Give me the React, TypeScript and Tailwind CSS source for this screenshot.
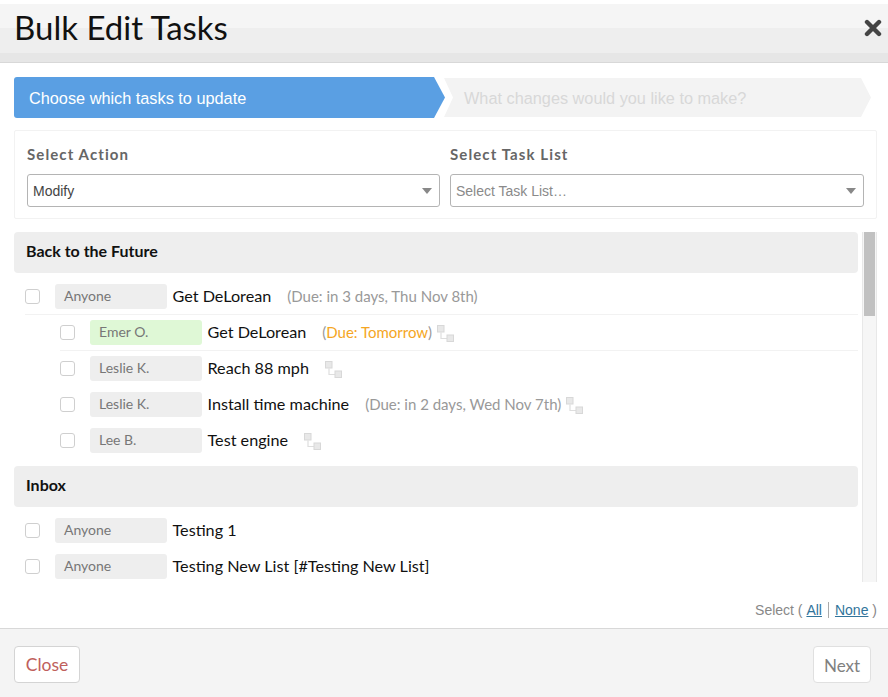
import React from 'react';

const SANS = 'font-["Lato","Open_Sans",sans-serif]';

function SubtaskIcon() {
  return (
    <svg width="18" height="18" viewBox="0 0 18 18" className="block mt-[4px]">
      <path d="M4 7.5V13.5H10.5" fill="none" stroke="#dedede" strokeWidth="1.2" />
      <rect x="0.5" y="0.5" width="6.5" height="6.5" fill="#e8e8e8" stroke="#d8d8d8" />
      <rect x="10" y="10" width="6.5" height="6.5" fill="#e8e8e8" stroke="#d8d8d8" />
    </svg>
  );
}

type Row = {
  who: string;
  title: string;
  due?: string;
  soon?: boolean;
  nested?: boolean;
  sub?: boolean;
  line?: boolean;
};

function TaskRow({ r }: { r: Row }) {
  return (
    <div className={`h-9 flex items-center ${r.nested ? 'pl-[46px]' : 'pl-[11px]'}`}>
      <div className={`h-full flex items-center flex-1 ${r.line ? 'shadow-[0_1px_0_#f2f2f2]' : ''}`}>
        <span className="w-[15px] h-[15px] rounded-[3px] border border-[#cfcfcf] bg-white shrink-0" />
        <span className={`ml-[15px] w-[111.5px] h-[25px] rounded-[3px] pl-[9px] flex items-center text-[14px] text-[#777] shrink-0 ${r.who === 'Emer O.' ? 'bg-[#dff8d6]' : 'bg-[#eeeeee]'}`}>
          <span className="-mt-[1px]">{r.who}</span>
        </span>
        <span className="ml-[6px] text-[16.2px] text-[#111]">{r.title}</span>
        {r.due && (
          <span className="ml-4 text-[15px] text-[#999]">
            ({r.soon ? <span className="text-[#f5a623]">{r.due}</span> : r.due})
          </span>
        )}
        {r.sub && <span className={r.due ? 'ml-[5px]' : 'ml-4'}><SubtaskIcon /></span>}
      </div>
    </div>
  );
}

function GroupHeader({ name }: { name: string }) {
  return (
    <div className="h-[41px] bg-[#eeeeee] rounded-[4px] flex items-center pl-3 pb-[4px] text-[16px] font-bold text-[#111]">
      {name}
    </div>
  );
}

function Select({ value, muted }: { value: string; muted?: boolean }) {
  return (
    <div className="h-[33px] rounded-[3px] border border-[#b4b4b4] bg-white flex items-center justify-between pl-[5px] pr-[7px]">
      <span className={`text-[14px] pt-[2px] font-["Liberation_Sans",sans-serif] ${muted ? 'text-[#8a8a8a]' : 'text-[#444]'}`}>{value}</span>
      <span className="w-0 h-0 border-l-[5px] border-r-[5px] border-t-[6px] border-l-transparent border-r-transparent border-t-[#888]" />
    </div>
  );
}

export default function App() {
  return (
    <div className={`w-[888px] h-[697px] bg-white flex flex-col overflow-hidden ${SANS}`}>
      {/* Header */}
      <div className="h-[63px] pt-1 bg-white shrink-0">
        <div className="h-[59px] pb-[11px] border-b border-[#d8d8d8] bg-[linear-gradient(#f5f5f5_0,#f5f5f5_41%,#eeeeee_41%,#eeeeee_85%,#e6e6e6_85%)] flex items-center justify-between pl-[14px] pr-[6px]">
          <h1 className="text-[33px] leading-none text-[#111]">Bulk Edit Tasks</h1>
          <svg width="18" height="18" viewBox="0 0 18 18">
            <path d="M3 3l12 12M15 3L3 15" stroke="#444" strokeWidth="4.4" strokeLinecap="round" />
          </svg>
        </div>
      </div>

      <div className="flex-1 min-h-0 px-[11px] pl-[14px] pt-[14px] flex flex-col">
        {/* Steps */}
        <div className="flex h-[41px] font-['Liberation_Sans',sans-serif] w-[857px]">
          <div className="w-[431px] h-full rounded-l-[3px] bg-[#5a9fe3] text-white text-[16.3px] flex items-center pl-[15px] pt-[2px] [clip-path:polygon(0_0,420px_0,100%_50%,420px_100%,0_100%)]">
            Choose which tasks to update
          </div>
          <div className="-ml-[1px] flex-1 my-[1px] bg-[#f3f3f3] text-[#d8d8d8] text-[16.3px] flex items-center pl-[20px] pt-[2px] [clip-path:polygon(0_0,417px_0,100%_50%,417px_100%,0_100%,9px_50%)]">
            What changes would you like to make?
          </div>
        </div>

        {/* Selects */}
        <div className="mt-3 w-[863px] h-[89px] border border-[#f2f2f2] rounded-[2px] grid grid-cols-[413px_414px] gap-x-[10px] pl-3 pt-[12px]">
          <div>
            <div className="text-[15px] font-bold tracking-[1.1px] text-[#666] h-[31px]">Select Action</div>
            <Select value="Modify" />
          </div>
          <div>
            <div className="text-[15px] font-bold tracking-[1.1px] text-[#666] h-[31px]">Select Task List</div>
            <Select value="Select Task List…" muted />
          </div>
        </div>

        {/* Task list */}
        <div className="mt-[13px] w-[863px] h-[350px] flex">
          <div className="w-[844px] shrink-0">
            <GroupHeader name="Back to the Future" />
            <div className="pt-[5px]">
              <TaskRow r={{ who: 'Anyone', title: 'Get DeLorean', due: 'Due: in 3 days, Thu Nov 8th', line: true }} />
              <TaskRow r={{ who: 'Emer O.', title: 'Get DeLorean', due: 'Due: Tomorrow', soon: true, nested: true, sub: true, line: true }} />
              <TaskRow r={{ who: 'Leslie K.', title: 'Reach 88 mph', nested: true, sub: true }} />
              <TaskRow r={{ who: 'Leslie K.', title: 'Install time machine', due: 'Due: in 2 days, Wed Nov 7th', nested: true, sub: true }} />
              <TaskRow r={{ who: 'Lee B.', title: 'Test engine', nested: true, sub: true }} />
            </div>
            <div className="mt-[8px]">
              <GroupHeader name="Inbox" />
            </div>
            <div className="pt-[5px]">
              <TaskRow r={{ who: 'Anyone', title: 'Testing 1' }} />
              <TaskRow r={{ who: 'Anyone', title: 'Testing New List [#Testing New List]' }} />
            </div>
          </div>
          <div className="ml-[4px] w-[15px] h-full border-x border-[#e8e8e8] bg-[#f6f6f6] px-px">
            <div className="h-[84px] bg-[#c1c1c1]" />
          </div>
        </div>

        {/* Select all/none */}
        <div className="flex-1 flex items-center justify-end pt-[10px] text-[14px] text-[#888] font-['Liberation_Sans',sans-serif]">
          Select (&nbsp;<a className="text-[#31749b] underline">All</a>
          <span className="mx-[6px] w-px h-[16px] bg-[#aaa]" />
          <a className="text-[#31749b] underline">None</a>&nbsp;)
        </div>
      </div>

      {/* Footer */}
      <div className="h-[69px] shrink-0 border-t border-[#d8d8d8] bg-[#f4f4f4] flex items-center justify-between pl-[14px] pr-[17px] pt-[3px]">
        <button className="w-[66px] h-[37px] pt-[2px] rounded-[4px] border border-[#d4d4d4] bg-white text-[17.5px] text-[#c0605c]">Close</button>
        <button className="w-[58px] h-[37px] pt-[2px] rounded-[4px] border border-[#e0e0e0] bg-white text-[17px] text-[#808080]">Next</button>
      </div>
    </div>
  );
}
